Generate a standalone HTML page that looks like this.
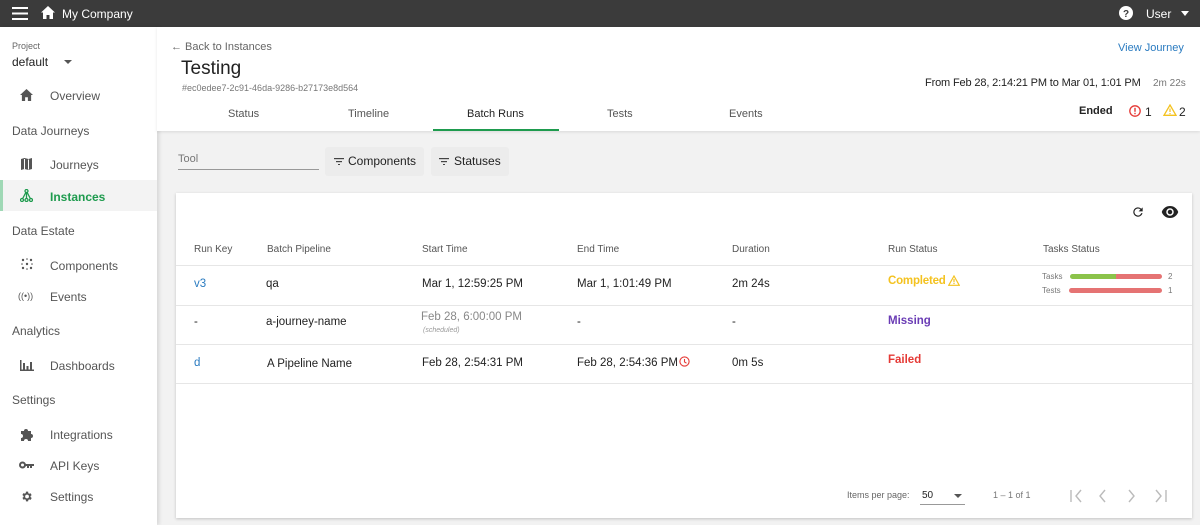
<!DOCTYPE html>
<html><head><meta charset="utf-8"><style>
*{box-sizing:border-box;margin:0;padding:0}
body{width:1200px;height:525px;overflow:hidden;font-family:"Liberation Sans",sans-serif;background:#f2f2f2;position:relative;color:#222}
.a{position:absolute;white-space:nowrap}
.top{position:absolute;left:0;top:0;width:1200px;height:27px;background:#3b3b3b;color:#fff}
.side{position:absolute;left:0;top:27px;width:157px;height:498px;background:#fff;box-shadow:2px 0 4px rgba(0,0,0,.12)}
.hdr{position:absolute;left:157px;top:27px;width:1043px;height:104px;background:#fff;box-shadow:0 1px 3px rgba(0,0,0,.1)}
.card{position:absolute;left:176px;top:193px;width:1016px;height:325px;background:#fff;box-shadow:0 1px 3px rgba(0,0,0,.2)}
.sec{font-size:12px;color:#555}
.it{font-size:12px;color:#555}
.row{position:absolute;left:0;width:1016px;border-top:1px solid #e6e6e6}
.c{font-size:11.5px;color:#222}
.h{font-size:10px;color:#555}
.btn{position:absolute;top:147px;height:29px;background:#ececec;border-radius:3px;font-size:12px;color:#222;line-height:29px;padding-left:23px}
</style></head><body>
<div class="top">
<svg class="a" style="left:12px;top:7px" width="16" height="13"><rect y="0" width="16" height="2" fill="#fff"/><rect y="5.5" width="16" height="2" fill="#fff"/><rect y="11" width="16" height="2" fill="#fff"/></svg>
<svg class="a" style="left:41px;top:6px" width="14" height="13" viewBox="0 0 14 13"><path d="M7 0L0 6.5h2V13h3.5V9h3v4H12V6.5h2z" fill="#fff"/></svg>
<div class="a" style="left:62px;top:7px;font-size:12px">My Company</div>
<svg class="a" style="left:1119px;top:6px" width="14" height="14"><circle cx="7" cy="7" r="7" fill="#fff"/><text x="7" y="11" font-size="10" font-weight="bold" text-anchor="middle" fill="#3b3b3b" font-family="Liberation Sans">?</text></svg>
<div class="a" style="left:1146px;top:7px;font-size:12px">User</div>
<div class="a" style="left:1181px;top:11px;border-left:4px solid transparent;border-right:4px solid transparent;border-top:5px solid #fff"></div>
</div>
<div class="side">
<div class="a" style="left:12px;top:14px;font-size:9px;color:#666">Project</div>
<div class="a" style="left:12px;top:28px;font-size:12px">default</div>
<div class="a" style="left:64px;top:33px;border-left:4px solid transparent;border-right:4px solid transparent;border-top:4px solid #555"></div>
<svg class="a" style="left:20px;top:62px" width="13" height="12" viewBox="0 0 14 13"><path d="M7 0L0 6.5h2V13h3.5V9h3v4H12V6.5h2z" fill="#555"/></svg>
<div class="a it" style="left:50px;top:62px">Overview</div>
<div class="a sec" style="left:12px;top:97px">Data Journeys</div>
<svg class="a" style="left:21px;top:131px" width="11" height="12"><path d="M0 1l3.5-1 4 1 3.5-1v11l-3.5 1-4-1L0 12z" fill="#555"/><path d="M3.5 1v10M7.5 1.5v10" stroke="#fff"/></svg>
<div class="a it" style="left:50px;top:131px">Journeys</div>
<div class="a" style="left:0;top:153px;width:157px;height:31px;background:#f3f3f3;border-left:3px solid #9fd8b5"></div>
<svg class="a" style="left:20px;top:162px" width="13" height="13"><g fill="none" stroke="#1e9b4e" stroke-width="1.3"><circle cx="6.5" cy="2" r="1.5"/><circle cx="2" cy="11" r="1.5"/><circle cx="6.5" cy="11" r="1.5"/><circle cx="11" cy="11" r="1.5"/><path d="M6.5 3.5v6M5.8 3.5L2.7 9.5M7.2 3.5l3.1 6"/></g></svg>
<div class="a" style="left:50px;top:163px;font-size:12px;color:#1e9b4e;font-weight:bold">Instances</div>
<div class="a sec" style="left:12px;top:197px">Data Estate</div>
<svg class="a" style="left:21px;top:231px" width="12" height="12" fill="#555"><circle cx="2" cy="2" r="1.2"/><circle cx="10" cy="2" r="1.2"/><circle cx="6" cy="6" r="1.2"/><circle cx="2" cy="10" r="1.2"/><circle cx="10" cy="10" r="1.2"/><circle cx="6" cy="1" r=".8"/><circle cx="1" cy="6" r=".8"/><circle cx="11" cy="6" r=".8"/><circle cx="6" cy="11" r=".8"/></svg>
<div class="a it" style="left:50px;top:232px">Components</div>
<div class="a" style="left:18px;top:264px;font-size:9px;color:#555">((•))</div>
<div class="a it" style="left:50px;top:263px">Events</div>
<div class="a sec" style="left:12px;top:297px">Analytics</div>
<svg class="a" style="left:20px;top:333px" width="14" height="11" fill="#555"><rect x="0" y="0" width="1.5" height="11"/><rect x="0" y="9.5" width="14" height="1.5"/><rect x="3" y="3" width="2" height="7"/><rect x="6.5" y="6" width="2" height="4"/><rect x="10" y="2" width="2" height="8"/></svg>
<div class="a it" style="left:50px;top:332px">Dashboards</div>
<div class="a sec" style="left:12px;top:366px">Settings</div>
<svg class="a" style="left:20px;top:400px" width="14" height="14"><path d="M1 4h3a2 2 0 1 1 4 0h3v3a2 2 0 1 1 0 4v3H8a2 2 0 1 0-4 0H1V11a2 2 0 1 0 0-4z" fill="#555"/></svg>
<div class="a it" style="left:50px;top:401px">Integrations</div>
<svg class="a" style="left:19px;top:434px" width="16" height="8"><circle cx="3.5" cy="4" r="2.5" fill="none" stroke="#555" stroke-width="2"/><path d="M6 3h9v2h-2v2h-2V5h-1v2H8V5H6z" fill="#555"/></svg>
<div class="a it" style="left:50px;top:432px">API Keys</div>
<svg class="a" style="left:20px;top:463px" width="13" height="13" viewBox="0 0 24 24"><path fill="#555" d="M19.4 13a7.5 7.5 0 0 0 0-2l2.1-1.6-2-3.5-2.5 1a7 7 0 0 0-1.7-1L15 3h-4l-.4 2.7a7 7 0 0 0-1.7 1l-2.5-1-2 3.5L6.6 11a7.5 7.5 0 0 0 0 2l-2.1 1.6 2 3.5 2.5-1a7 7 0 0 0 1.7 1L11 21h4l.4-2.7a7 7 0 0 0 1.7-1l2.5 1 2-3.5zM13 15.5a3.5 3.5 0 1 1 0-7 3.5 3.5 0 0 1 0 7z"/></svg>
<div class="a it" style="left:50px;top:463px">Settings</div>
</div>
<div class="hdr">
<div class="a" style="left:14px;top:14px;font-size:11px;color:#666">← Back to Instances</div>
<div class="a" style="left:24px;top:31px;font-size:19px;color:#222">Testing</div>
<div class="a" style="left:25px;top:56px;font-size:9px;color:#777">#ec0edee7-2c91-46da-9286-b27173e8d564</div>
<div class="a" style="left:961px;top:15px;font-size:11px;color:#2a7bc0">View Journey</div>
<div class="a" style="left:768px;top:50px;font-size:11px;color:#222;letter-spacing:-0.15px">From Feb 28, 2:14:21 PM to Mar 01, 1:01 PM</div>
<div class="a" style="left:996px;top:51px;font-size:10px;color:#777">2m 22s</div>
<div class="a" style="left:922px;top:78px;font-size:11px;color:#222;font-weight:bold">Ended</div>
<svg class="a" style="left:972px;top:78px" width="12" height="12"><circle cx="6" cy="6" r="5.2" fill="none" stroke="#e53935" stroke-width="1.3"/><rect x="5.3" y="2.8" width="1.4" height="4" fill="#e53935"/><rect x="5.3" y="7.8" width="1.4" height="1.4" fill="#e53935"/></svg>
<div class="a" style="left:988px;top:78px;font-size:12px">1</div>
<svg class="a" style="left:1006px;top:77px" width="14" height="12"><path d="M7 1L13 11.3H1z" fill="none" stroke="#f4c21f" stroke-width="1.3"/><rect x="6.4" y="4.5" width="1.2" height="3.5" fill="#f4c21f"/><rect x="6.4" y="9" width="1.2" height="1.2" fill="#f4c21f"/></svg>
<div class="a" style="left:1022px;top:78px;font-size:12px">2</div>
<div class="a" style="left:71px;top:81px;font-size:11px;color:#555">Status</div>
<div class="a" style="left:191px;top:81px;font-size:11px;color:#555">Timeline</div>
<div class="a" style="left:310px;top:81px;font-size:11px;color:#222">Batch Runs</div>
<div class="a" style="left:450px;top:81px;font-size:11px;color:#555">Tests</div>
<div class="a" style="left:572px;top:81px;font-size:11px;color:#555">Events</div>
<div class="a" style="left:276px;top:102px;width:126px;height:2px;background:#1e9b4e"></div>
</div>
<div class="a" style="left:178px;top:153px;font-size:11px;color:#777">Tool</div>
<div class="a" style="left:178px;top:169px;width:141px;height:1px;background:#999"></div>
<div class="btn" style="left:325px;width:99px">Components</div>
<div class="btn" style="left:431px;width:78px">Statuses</div>
<svg class="a" style="left:334px;top:158px" width="10" height="7" fill="#444"><rect width="10" height="1.2"/><rect x="2" y="3" width="6" height="1.2"/><rect x="4" y="6" width="2" height="1.2"/></svg>
<svg class="a" style="left:439px;top:158px" width="10" height="7" fill="#444"><rect width="10" height="1.2"/><rect x="2" y="3" width="6" height="1.2"/><rect x="4" y="6" width="2" height="1.2"/></svg>
<div class="card">
<svg class="a" style="left:955px;top:12px" width="14" height="14" viewBox="0 0 24 24"><path fill="#222" d="M17.6 6.4A8 8 0 1 0 19.7 14h-2.1A6 6 0 1 1 12 6a5.9 5.9 0 0 1 4.2 1.8L13 11h7V4z"/></svg>
<svg class="a" style="left:985px;top:13px" width="18" height="12" viewBox="0 0 24 16"><path fill="#222" d="M12 0C7 0 2.7 3.1 1 8c1.7 4.9 6 8 11 8s9.3-3.1 11-8c-1.7-4.9-6-8-11-8zm0 13a5 5 0 1 1 0-10 5 5 0 0 1 0 10zm0-8a3 3 0 1 0 0 6 3 3 0 0 0 0-6z"/></svg>
<div class="a h" style="left:18px;top:51px">Run Key</div>
<div class="a h" style="left:91px;top:51px">Batch Pipeline</div>
<div class="a h" style="left:246px;top:51px">Start Time</div>
<div class="a h" style="left:401px;top:51px">End Time</div>
<div class="a h" style="left:556px;top:51px">Duration</div>
<div class="a h" style="left:712px;top:51px">Run Status</div>
<div class="a h" style="left:867px;top:51px">Tasks Status</div>
<div class="row" style="top:72px"></div>
<div class="a c" style="left:18px;top:85px;color:#2a7bc0">v3</div>
<div class="a c" style="left:90px;top:85px">qa</div>
<div class="a c" style="left:246px;top:85px">Mar 1, 12:59:25 PM</div>
<div class="a c" style="left:401px;top:85px">Mar 1, 1:01:49 PM</div>
<div class="a c" style="left:556px;top:85px">2m 24s</div>
<div class="a" style="left:712px;top:82px;font-size:11.5px;color:#f4c21f;font-weight:bold;letter-spacing:-0.2px">Completed</div>
<svg class="a" style="left:772px;top:82px" width="12" height="11"><path d="M6 1L11.3 10.3H.7z" fill="none" stroke="#f4c21f" stroke-width="1.2"/><rect x="5.4" y="4" width="1.2" height="3.3" fill="#f4c21f"/><rect x="5.4" y="8" width="1.2" height="1.1" fill="#f4c21f"/></svg>
<div class="a" style="left:866px;top:79px;font-size:8px;color:#777">Tasks</div>
<div class="a" style="left:894px;top:81px;width:92px;height:5px;border-radius:3px;background:linear-gradient(90deg,#8bc34a 50%,#e57373 50%)"></div>
<div class="a" style="left:992px;top:79px;font-size:8px;color:#777">2</div>
<div class="a" style="left:866px;top:93px;font-size:8px;color:#777">Tests</div>
<div class="a" style="left:893px;top:95px;width:93px;height:5px;border-radius:3px;background:#e57373"></div>
<div class="a" style="left:992px;top:93px;font-size:8px;color:#777">1</div>
<div class="row" style="top:112px"></div>
<div class="a c" style="left:18px;top:123px">-</div>
<div class="a c" style="left:90px;top:123px">a-journey-name</div>
<div class="a c" style="left:245px;top:118px;color:#888">Feb 28, 6:00:00 PM</div>
<div class="a" style="left:247px;top:134px;font-size:7px;color:#999;font-style:italic">(scheduled)</div>
<div class="a c" style="left:401px;top:123px">-</div>
<div class="a c" style="left:556px;top:123px">-</div>
<div class="a" style="left:712px;top:122px;font-size:11.5px;color:#6a3cb5;font-weight:bold">Missing</div>
<div class="row" style="top:151px"></div>
<div class="a c" style="left:18px;top:164px;color:#2a7bc0">d</div>
<div class="a c" style="left:91px;top:165px">A Pipeline Name</div>
<div class="a c" style="left:246px;top:164px">Feb 28, 2:54:31 PM</div>
<div class="a c" style="left:401px;top:164px">Feb 28, 2:54:36 PM</div>
<svg class="a" style="left:503px;top:163px" width="11" height="11"><circle cx="5.5" cy="5.5" r="4.6" fill="none" stroke="#e53935" stroke-width="1.1"/><path d="M5.5 3v3l2 1.2" fill="none" stroke="#e53935" stroke-width="1.1"/></svg>
<div class="a c" style="left:556px;top:164px">0m 5s</div>
<div class="a" style="left:712px;top:161px;font-size:11.5px;color:#e53935;font-weight:bold">Failed</div>
<div class="row" style="top:190px"></div>
<div class="a" style="left:671px;top:297px;font-size:9px;color:#666">Items per page:</div>
<div class="a" style="left:746px;top:297px;font-size:10px;color:#222">50</div>
<div class="a" style="left:778px;top:301px;border-left:4px solid transparent;border-right:4px solid transparent;border-top:4px solid #555"></div>
<div class="a" style="left:744px;top:311px;width:45px;height:1px;background:#999"></div>
<div class="a" style="left:817px;top:297px;font-size:9px;color:#777">1 – 1 of 1</div>
<svg class="a" style="left:893px;top:296px" width="110" height="14" fill="none" stroke="#bbb" stroke-width="1.4"><path d="M2 1v12M12 1L7 7l5 6"/><path d="M36 1l-5 6 5 6"/><path d="M60 1l5 6-5 6"/><path d="M87 1l5 6-5 6M97 1v12"/></svg>
</div>
</body></html>
